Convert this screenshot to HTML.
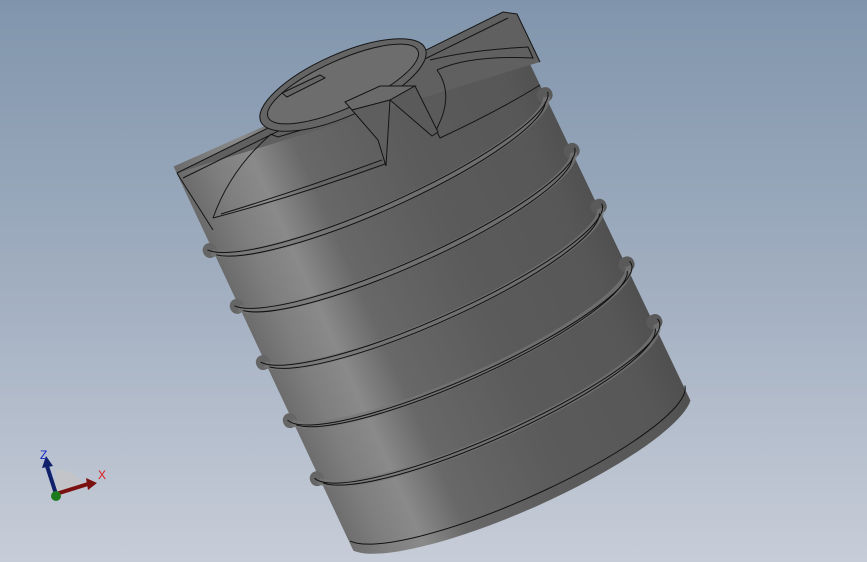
<!DOCTYPE html>
<html><head><meta charset="utf-8"><style>
html,body{margin:0;padding:0;width:867px;height:562px;overflow:hidden}
svg{display:block}
</style></head><body>
<svg width="867" height="562" viewBox="0 0 867 562" xmlns="http://www.w3.org/2000/svg">
<defs>
<linearGradient id="bg" x1="0" y1="0" x2="0" y2="1">
<stop offset="0" stop-color="#8095ac"/><stop offset="0.5" stop-color="#a1aec0"/><stop offset="1" stop-color="#c7cdd8"/>
</linearGradient>
<linearGradient id="body" x1="0" y1="0" x2="1" y2="0">
<stop offset="0" stop-color="#6a6a6a"/><stop offset="0.1" stop-color="#7e7e7e"/><stop offset="0.2" stop-color="#8a8a8a"/>
<stop offset="0.32" stop-color="#686868"/><stop offset="0.6" stop-color="#5b5b5b"/><stop offset="0.9" stop-color="#575757"/><stop offset="1" stop-color="#4f4f4f"/>
</linearGradient>
</defs>
<rect width="867" height="562" fill="url(#bg)"/>

<g transform="translate(176,172) rotate(-24)">
  <path d="M0,-6 L366,-6 L377,418 A188 42 0 0 1 8 418 Z" fill="url(#body)"/>
  <g fill="#666">
    <rect x="-8" y="78" width="14" height="15" rx="7"/>
    <rect x="-6" y="140" width="14" height="15" rx="7"/>
    <rect x="-5" y="202" width="14" height="15" rx="7"/>
    <rect x="-4" y="266" width="14" height="15" rx="7"/>
    <rect x="-3" y="330" width="14" height="15" rx="7"/>
    <rect x="360" y="72" width="16" height="15" rx="7" fill="#5a5a5a"/>
    <rect x="362" y="134" width="16" height="15" rx="7" fill="#5a5a5a"/>
    <rect x="364" y="196" width="16" height="15" rx="7" fill="#5a5a5a"/>
    <rect x="366" y="260" width="16" height="15" rx="7" fill="#5a5a5a"/>
    <rect x="368" y="324" width="16" height="15" rx="7" fill="#5a5a5a"/>
  </g>
  <g fill="none" stroke="#777" stroke-width="7" opacity="0.7">
    <path d="M0,88 A187 38 0 0 0 369,82"/>
    <path d="M2,150 A187 38 0 0 0 371,144"/>
    <path d="M3,212 A187 38 0 0 0 373,206"/>
    <path d="M4,276 A187 38 0 0 0 375,270"/>
    <path d="M5,340 A187 38 0 0 0 377,334"/>
  </g>
  <g fill="none" stroke="#111" stroke-width="1">
    <path d="M-3,84 A189 38 0 0 0 372,78"/><path d="M3,92 A185 38 0 0 0 366,86"/>
    <path d="M-1,146 A189 38 0 0 0 374,140"/><path d="M5,154 A185 38 0 0 0 368,148"/>
    <path d="M0,208 A189 38 0 0 0 376,202"/><path d="M6,216 A185 38 0 0 0 370,210"/>
    <path d="M1,272 A189 38 0 0 0 378,266"/><path d="M7,280 A185 38 0 0 0 372,274"/>
    <path d="M2,336 A189 38 0 0 0 380,330"/><path d="M8,344 A185 38 0 0 0 374,338"/>
    <path d="M9,408 A186 40 0 0 0 378,402"/>
  </g>
</g>

<g fill="none" stroke="#151515" stroke-width="1">
  <path d="M177,173 L503,12 L517,14 L540,62" fill="#606060"/>
  <path d="M183,178 L508,18"/>
  <path d="M177,173 L180,178 L213,230"/>
  <path d="M213,218 Q230,170 270,135 M213,218 Q300,195 385,164 L381,118 Q376,105 350,110"/>
  <path d="M221,214 Q300,190 382,160"/>
  <path d="M430,60 Q470,50 528,47 L533,58 Q470,55 437,70"/>
  <path d="M437,70 Q455,95 436,130 L440,138 Q500,110 540,85"/>
  <path d="M270,134 L278,137 L345,117"/>
</g>
<ellipse cx="343" cy="85" rx="90" ry="31" transform="rotate(-24 343 85)" fill="#646464" stroke="#151515"/>
<ellipse cx="343" cy="84" rx="82" ry="24" transform="rotate(-24 343 84)" fill="#6d6d6d" stroke="#151515"/>
<path d="M282,93 L320,75 L325,78 L287,97 Z" fill="#666" stroke="#151515"/>
<path d="M345,102 L380,86 L415,86 L390,100 L352,110 Z" fill="#6a6a6a" stroke="#151515"/>
<path d="M390,100 L415,86 L438,132 L432,136 Z" fill="#5a5a5a" stroke="#151515"/>
<path d="M352,110 L390,100 L386,166 L378,140 Z" fill="#5e5e5e" stroke="#151515"/>

<path d="M56,494 L56,470 A28 28 0 0 1 84,486 Z" fill="#c4c4c4" opacity="0.8"/>
<line x1="56" y1="494" x2="47" y2="466" stroke="#10206a" stroke-width="4"/>
<path d="M42,468 L46,456 L53,466 Z" fill="#10206a"/>
<line x1="56" y1="494" x2="88" y2="484" stroke="#7a1010" stroke-width="4"/>
<path d="M86,478 L97,483 L88,490 Z" fill="#7a1010"/>
<circle cx="56" cy="496" r="5" fill="#1c7a1c"/>
<text x="40" y="459" font-family="Liberation Sans, sans-serif" font-size="12" fill="#1428c8">Z</text>
<text x="98" y="479" font-family="Liberation Sans, sans-serif" font-size="12" fill="#e01818">X</text>
</svg>
</body></html>
